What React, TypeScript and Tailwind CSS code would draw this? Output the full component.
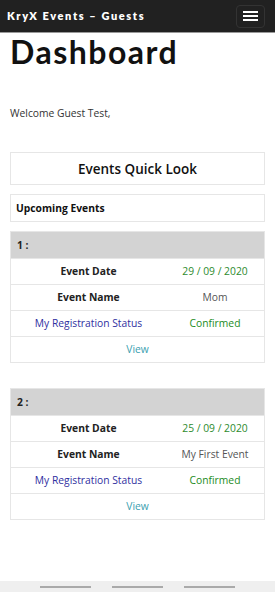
const events = [
  { id: 1, date: "29 / 09 / 2020", name: "Mom", status: "Confirmed" },
  { id: 2, date: "25 / 09 / 2020", name: "My First Event", status: "Confirmed" },
];

function EventCard({ ev }: { ev: (typeof events)[number] }) {
  return (
    <div className="border border-[#e6e6e6] text-[10.3px]">
      <div className="flex h-[26px] items-center bg-[#d3d3d3] px-[6px] font-bold text-[#222]">{ev.id} :</div>
      <div className="grid h-[26px] grid-cols-[155px_1fr] items-center border-t border-[#e6e6e6] text-center">
        <div className="font-bold text-[#222]">Event Date</div>
        <div className="text-[#2e8b2e]">{ev.date}</div>
      </div>
      <div className="grid h-[26px] grid-cols-[155px_1fr] items-center border-t border-[#e6e6e6] text-center">
        <div className="font-bold text-[#222]">Event Name</div>
        <div className="text-[#555]">{ev.name}</div>
      </div>
      <div className="grid h-[26px] grid-cols-[155px_1fr] items-center border-t border-[#e6e6e6] text-center">
        <div className="text-[#2f2f9f]">My Registration Status</div>
        <div className="text-[#228b22]">{ev.status}</div>
      </div>
      <div className="flex h-[26px] items-center justify-center border-t border-[#e6e6e6] text-[#3aa0b0]">View</div>
    </div>
  );
}

export default function App() {
  return (
    <div className="relative h-[592px] w-[275px] overflow-hidden bg-white font-['Open_Sans',sans-serif]">
      {/* Navbar */}
      <div className="flex h-[33px] items-center justify-between border-b border-[#999] bg-[#212121] pl-[7px] pr-[10px]">
        <span className="font-['Lato',sans-serif] text-[11px] font-extrabold tracking-[1.6px] text-white">
          KryX Events – Guests
        </span>
        <button className="flex h-[23px] w-[29px] flex-col items-center justify-center gap-[2px] rounded border border-[#333]">
          <span className="h-[2px] w-[15px] bg-white" />
          <span className="h-[2px] w-[15px] bg-white" />
          <span className="h-[2px] w-[15px] bg-white" />
        </button>
      </div>

      <div className="px-[10px]">
        <h1 className="mt-[1px] font-['Lato',sans-serif] text-[32px] leading-[36px] font-bold tracking-[1.5px] text-[#111]">
          Dashboard
        </h1>
        <p className="mt-[36px] text-[10.3px] text-[#333]">Welcome Guest Test,</p>

        <div className="mt-[31px] flex h-[33px] items-center justify-center border border-[#e6e6e6] text-[13.5px] font-semibold text-[#111]">
          Events Quick Look
        </div>
        <div className="mt-[9px] flex h-[28px] items-center border border-[#e6e6e6] px-[5px] text-[10.3px] font-bold text-[#111]">
          Upcoming Events
        </div>

        <div className="mt-[9px]">
          <EventCard ev={events[0]} />
        </div>
        <div className="mt-[25px]">
          <EventCard ev={events[1]} />
        </div>
      </div>

      {/* Bottom bar */}
      <div className="absolute bottom-0 left-0 flex h-[11px] w-full items-start justify-center gap-[21px] bg-[#efefef] pt-[5px]">
        <span className="h-[2px] w-[51px] bg-[#aaa]" />
        <span className="h-[2px] w-[51px] bg-[#aaa]" />
        <span className="h-[2px] w-[51px] bg-[#aaa]" />
      </div>
    </div>
  );
}
